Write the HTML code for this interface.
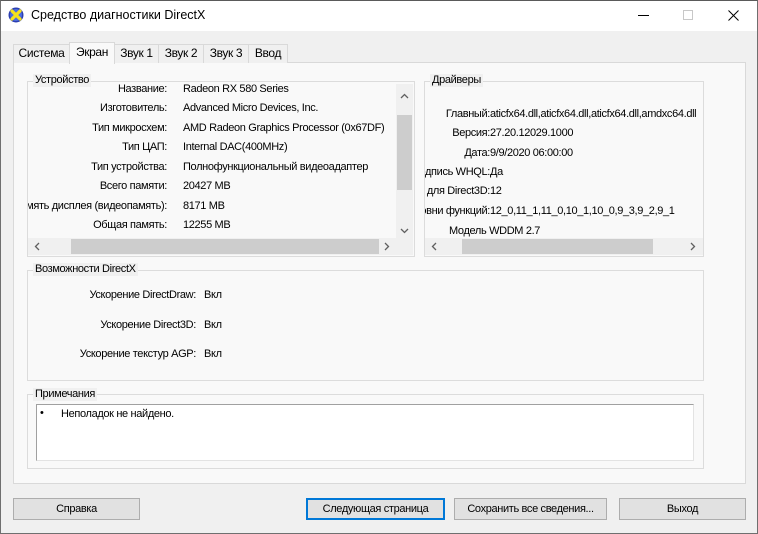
<!DOCTYPE html>
<html><head><meta charset="utf-8"><style>
*{margin:0;padding:0;box-sizing:border-box}
body{width:758px;height:534px;overflow:hidden;background:#f0f0f0;font-family:"Liberation Sans","Noto Sans CJK SC",sans-serif;font-size:11px;letter-spacing:-0.35px;color:#000;position:relative}
.a{position:absolute}
.win{position:absolute;left:0;top:0;width:758px;height:534px;border:1px solid #6f6f6f;border-top-color:#5a5a5a}
.title{position:absolute;left:1px;top:1px;width:756px;height:30px;background:#fff}
.tab{position:absolute;top:44px;height:19px;border:1px solid #d9d9d9;border-bottom:none;background:#f0f0f0;text-align:center;line-height:17px;font-size:12px}
.panel{position:absolute;left:13px;top:62px;width:733px;height:422px;border:1px solid #d9d9d9;background:#f9f9f9}
.gb{position:absolute;border:1px solid #dcdcdc}
.cap{position:absolute;background:#f0f0f0;padding:0 2px;line-height:13px}
.lbl{position:absolute;white-space:nowrap;text-align:right}
.val{position:absolute;white-space:nowrap}
.btn{position:absolute;top:498px;height:22px;border:1px solid #adadad;background:#e1e1e1;text-align:center;line-height:20px}
.sb{position:absolute;background:#f0f0f0}
.th{position:absolute;background:#cdcdcd}
svg.ar{position:absolute}
</style></head><body>
<div class="win"></div>
<div class="title"></div>
<svg class="a" style="left:8px;top:7px" width="16" height="16" viewBox="0 0 16 16"><circle cx="8" cy="8" r="7.5" fill="#2c3fb0"/><circle cx="8" cy="8" r="6" fill="#4d6ee0"/><path d="M4 4L12 12M12 4L4 12" stroke="#f5e21a" stroke-width="3.2" stroke-linecap="round"/></svg>
<div class="a" style="left:31px;top:8px;font-size:12.5px;letter-spacing:0">Средство диагностики DirectX</div>
<div class="a" style="left:638px;top:15px;width:11px;height:1px;background:#000"></div>
<div class="a" style="left:683px;top:10px;width:10px;height:10px;border:1px solid #c8c8c8"></div>
<svg class="a" style="left:728px;top:10px" width="11" height="11"><path d="M0.5 0.5L10.5 10.5M10.5 0.5L0.5 10.5" stroke="#000" stroke-width="1"/></svg>

<div class="panel"></div>
<div class="tab" style="left:13px;width:57px">Система</div>
<div class="tab" style="left:114px;width:45px">Звук 1</div>
<div class="tab" style="left:158px;width:46px">Звук 2</div>
<div class="tab" style="left:203px;width:46px">Звук 3</div>
<div class="tab" style="left:248px;width:40px">Ввод</div>
<div class="tab" style="left:69px;top:42px;width:46px;height:22px;background:#f9f9f9;line-height:18px">Экран</div>

<!-- Device -->
<div class="gb" style="left:27px;top:81px;width:388px;height:176px"></div>
<div class="a" style="left:28px;top:84px;width:368px;height:154px;overflow:hidden">
 <div class="lbl" style="right:229px;top:-1px">Название:</div><div class="val" style="left:155px;top:-1px">Radeon RX 580 Series</div>
 <div class="lbl" style="right:229px;top:18px">Изготовитель:</div><div class="val" style="left:155px;top:18px">Advanced Micro Devices, Inc.</div>
 <div class="lbl" style="right:229px;top:38px">Тип микросхем:</div><div class="val" style="left:155px;top:38px">AMD Radeon Graphics Processor (0x67DF)</div>
 <div class="lbl" style="right:229px;top:57px">Тип ЦАП:</div><div class="val" style="left:155px;top:57px">Internal DAC(400MHz)</div>
 <div class="lbl" style="right:229px;top:77px">Тип устройства:</div><div class="val" style="left:155px;top:77px">Полнофункциональный видеоадаптер</div>
 <div class="lbl" style="right:229px;top:96px">Всего памяти:</div><div class="val" style="left:155px;top:96px">20427 MB</div>
 <div class="lbl" style="right:229px;top:116px">Память дисплея (видеопамять):</div><div class="val" style="left:155px;top:116px">8171 MB</div>
 <div class="lbl" style="right:229px;top:135px">Общая память:</div><div class="val" style="left:155px;top:135px">12255 MB</div>
</div>
<div class="cap" style="left:33px;top:74px">Устройство</div>
<div class="sb" style="left:396px;top:84px;width:17px;height:154px"></div>
<div class="th" style="left:397px;top:115px;width:15px;height:75px"></div>
<svg class="ar" style="left:400px;top:93px" width="9" height="6"><path d="M1 5L4.5 1.5L8 5" stroke="#606060" fill="none" stroke-width="1.3"/></svg>
<svg class="ar" style="left:400px;top:228px" width="9" height="6"><path d="M1 1L4.5 4.5L8 1" stroke="#606060" fill="none" stroke-width="1.3"/></svg>
<div class="sb" style="left:28px;top:238px;width:385px;height:17px"></div>
<div class="th" style="left:71px;top:239px;width:308px;height:15px"></div>
<svg class="ar" style="left:34px;top:242px" width="6" height="9"><path d="M5 1L1.5 4.5L5 8" stroke="#606060" fill="none" stroke-width="1.3"/></svg>
<svg class="ar" style="left:384px;top:242px" width="6" height="9"><path d="M1 1L4.5 4.5L1 8" stroke="#606060" fill="none" stroke-width="1.3"/></svg>

<!-- Drivers -->
<div class="gb" style="left:424px;top:81px;width:280px;height:176px"></div>
<div class="a" style="left:425px;top:84px;width:278px;height:154px;overflow:hidden">
 <div class="lbl" style="right:213px;top:24px">Главный:</div><div class="val" style="left:65px;top:24px">aticfx64.dll,aticfx64.dll,aticfx64.dll,amdxc64.dll</div>
 <div class="lbl" style="right:213px;top:43px">Версия:</div><div class="val" style="left:65px;top:43px">27.20.12029.1000</div>
 <div class="lbl" style="right:213px;top:63px">Дата:</div><div class="val" style="left:65px;top:63px">9/9/2020 06:00:00</div>
 <div class="lbl" style="right:213px;top:82px">Подпись WHQL:</div><div class="val" style="left:65px;top:82px">Да</div>
 <div class="lbl" style="right:213px;top:101px">DDI для Direct3D:</div><div class="val" style="left:65px;top:101px">12</div>
 <div class="lbl" style="right:213px;top:121px">Уровни функций:</div><div class="val" style="left:65px;top:121px">12_0,11_1,11_0,10_1,10_0,9_3,9_2,9_1</div>
 <div class="val" style="left:24px;top:141px">Модель WDDM 2.7</div>
</div>
<div class="cap" style="left:430px;top:74px">Драйверы</div>
<div class="sb" style="left:425px;top:238px;width:278px;height:17px"></div>
<div class="th" style="left:462px;top:239px;width:191px;height:15px"></div>
<svg class="ar" style="left:431px;top:242px" width="6" height="9"><path d="M5 1L1.5 4.5L5 8" stroke="#606060" fill="none" stroke-width="1.3"/></svg>
<svg class="ar" style="left:690px;top:242px" width="6" height="9"><path d="M1 1L4.5 4.5L1 8" stroke="#606060" fill="none" stroke-width="1.3"/></svg>

<!-- DirectX features -->
<div class="gb" style="left:27px;top:270px;width:677px;height:111px"></div>
<div class="cap" style="left:33px;top:263px">Возможности DirectX</div>
<div class="lbl" style="right:562px;top:289px">Ускорение DirectDraw:</div><div class="val" style="left:204px;top:289px">Вкл</div>
<div class="lbl" style="right:562px;top:319px">Ускорение Direct3D:</div><div class="val" style="left:204px;top:319px">Вкл</div>
<div class="lbl" style="right:562px;top:348px">Ускорение текстур AGP:</div><div class="val" style="left:204px;top:348px">Вкл</div>

<!-- Notes -->
<div class="gb" style="left:27px;top:394px;width:677px;height:75px"></div>
<div class="cap" style="left:33px;top:388px">Примечания</div>
<div class="a" style="left:36px;top:404px;width:658px;height:57px;background:#fff;border:1px solid #a0a0a0;border-right-color:#e3e3e3;border-bottom-color:#e3e3e3"></div>
<div class="a" style="left:40px;top:407px">•</div>
<div class="a" style="left:61px;top:408px">Неполадок не найдено.</div>

<!-- buttons -->
<div class="btn" style="left:13px;width:127px">Справка</div>
<div class="btn" style="left:306px;width:139px;border:2px solid #0078d7;line-height:18px">Следующая страница</div>
<div class="btn" style="left:454px;width:153px">Сохранить все сведения...</div>
<div class="btn" style="left:619px;width:127px">Выход</div>
</body></html>
